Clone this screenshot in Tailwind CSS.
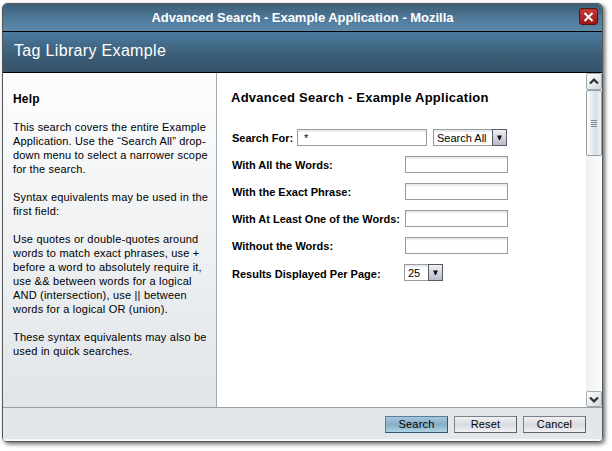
<!DOCTYPE html>
<html lang="en">
<head>
<meta charset="utf-8">
<title>Advanced Search - Example Application - Mozilla</title>
<script src="https://cdn.jsdelivr.net/npm/@tailwindcss/browser@4"></script>
</head>
<body class="bg-white w-[612px] h-[451px] overflow-hidden pl-[2px] pt-[3px] font-['Liberation_Sans',Arial,sans-serif] text-[11px] leading-[14px] text-black">
<div class="w-[601px] h-[439px] flex flex-col rounded-[5px] border border-[#55595c] overflow-hidden shadow-[2px_2px_4px_rgba(0,0,0,0.6)]">
  <header class="relative h-[28px] shrink-0 flex items-center justify-center border-b border-black bg-linear-to-b from-[#3c5d75] via-[#4f7898] to-[#5c8aab] text-white">
    <h1 class="text-[13px] font-bold leading-[16px] tracking-[-0.02px] whitespace-nowrap">Advanced Search - Example Application - Mozilla</h1>
    <button class="absolute left-[576px] top-[4px] w-[19px] h-[17px] flex items-center justify-center rounded-[3px] border border-[#5d1212] bg-linear-to-b from-[#c23a38] to-[#a01412]" aria-label="Close">
      <svg width="11" height="10" viewBox="0 0 11 10" fill="none" stroke="#fff" stroke-width="2"><path d="M1.5 1 9.500 9M9.500 1 1.500 9"/></svg>
    </button>
  </header>
  <div class="h-[41px] shrink-0 flex items-center pl-[11px] pb-[3px] border-b border-black bg-linear-to-b from-[#4a789c] from-5% via-[#3b5d76] via-60% to-[#36536a] text-white text-[16px] leading-[18px]"><span class="tracking-[0.33px]">Tag Library Example</span></div>
  <main class="h-[335px] shrink-0 flex border-b border-[#9a9fa3] bg-white">
    <aside class="w-[214px] shrink-0 border-r border-[#9eabb6] bg-linear-to-b from-[#fdfdfd] to-[#e1e5e8] pl-[10px] pt-[19px] whitespace-nowrap">
      <h2 class="font-bold text-[12px] tracking-[0.2px] mb-[14px]">Help</h2>
      <p class="mb-[14px] tracking-[0.16px]">This search covers the entire Example<br>Application. Use the “Search All” drop-<br>down menu to select a narrower scope<br>for the search.</p>
      <p class="mb-[14px] tracking-[0.18px]">Syntax equivalents may be used in the<br>first field:</p>
      <p class="mb-[14px] tracking-[0.2px]">Use quotes or double-quotes around<br>words to match exact phrases, use +<br>before a word to absolutely require it,<br>use &amp;&amp; between words for a logical<br>AND (intersection), use || between<br>words for a logical OR (union).</p>
      <p class="tracking-[0.2px]">These syntax equivalents may also be<br>used in quick searches.</p>
    </aside>
    <section class="grow pl-[14px] pt-[17px] whitespace-nowrap">
      <h2 class="font-bold text-[13px] leading-[16px] tracking-[0.26px] mb-[23px]">Advanced Search - Example Application</h2>
      <form class="flex flex-col gap-[10px] pl-[1px]">
        <div class="flex h-[17px]">
          <b class="w-[65px] pt-[2px]">Search For:</b>
          <div class="w-[130px] border border-[#9a9c9f] shadow-[inset_0_2px_1px_#e9eaeb] pl-[6px] pt-[1px] mr-[6px]">*</div>
          <div class="w-[74px] flex border border-[#9a9c9f] shadow-[inset_0_2px_1px_#e9eaeb]"><span class="pl-[3px] pt-[1px] grow">Search All</span><span class="w-[15px] h-[17px] -m-px flex items-center justify-center border border-[#565a66] bg-linear-to-b from-[#f0f0f5] to-[#b9bbc7]"><svg width="5" height="5" viewBox="0 0 5 5"><path d="M0 .5h5L3 5H2z" fill="#111"/></svg></span></div>
        </div>
        <div class="flex h-[17px]"><b class="w-[173px] pt-[2px]">With All the Words:</b><div class="w-[103px] border border-[#9a9c9f] shadow-[inset_0_2px_1px_#e9eaeb]"></div></div>
        <div class="flex h-[17px]"><b class="w-[173px] pt-[2px]">With the Exact Phrase:</b><div class="w-[103px] border border-[#9a9c9f] shadow-[inset_0_2px_1px_#e9eaeb]"></div></div>
        <div class="flex h-[17px]"><b class="w-[173px] pt-[2px]">With At Least One of the Words:</b><div class="w-[103px] border border-[#9a9c9f] shadow-[inset_0_2px_1px_#e9eaeb]"></div></div>
        <div class="flex h-[17px]"><b class="w-[173px] pt-[2px]">Without the Words:</b><div class="w-[103px] border border-[#9a9c9f] shadow-[inset_0_2px_1px_#e9eaeb]"></div></div>
        <div class="flex h-[17px]"><b class="w-[172px] pt-[3px]">Results Displayed Per Page:</b>
          <div class="w-[39px] flex border border-[#9a9c9f] shadow-[inset_0_2px_1px_#e9eaeb]"><span class="pl-[3px] pt-[1px] grow">25</span><span class="w-[15px] h-[17px] -m-px flex items-center justify-center border border-[#565a66] bg-linear-to-b from-[#f0f0f5] to-[#b9bbc7]"><svg width="5" height="5" viewBox="0 0 5 5"><path d="M0 .5h5L3 5H2z" fill="#111"/></svg></span></div>
        </div>
      </form>
    </section>
    <div class="w-[16px] shrink-0 flex flex-col bg-linear-to-r from-[#edf1f3] to-[#fbfcfc]">
      <div class="h-[17px] flex items-center justify-center rounded-[2px] border border-[#a2abb1] bg-linear-to-br from-white to-[#cfd9df]"><svg width="10" height="7" viewBox="0 0 10 7" fill="none" stroke="#303436" stroke-width="2.3"><path d="M1 5.500 5 1.700 9 5.500"/></svg></div>
      <div class="h-[66px] flex flex-col items-center justify-center gap-px rounded-[2px] border border-[#929da4] bg-linear-to-r from-[#fff] via-[#d8e0e8] via-60% to-[#eef2f5]">
        <i class="w-[6px] h-px bg-[#808a92]"></i><i class="w-[6px] h-px bg-[#808a92]"></i><i class="w-[6px] h-px bg-[#808a92]"></i><i class="w-[6px] h-px bg-[#808a92]"></i>
      </div>
      <div class="mt-auto h-[16px] flex items-center justify-center rounded-[2px] border border-[#a2abb1] bg-linear-to-br from-white to-[#cfd9df]"><svg width="10" height="7" viewBox="0 0 10 7" fill="none" stroke="#303436" stroke-width="2.3"><path d="M1 1.500 5 5.300 9 1.500"/></svg></div>
    </div>
  </main>
  <footer class="grow flex justify-end gap-[6px] pt-[8px] pr-[16px] bg-[#e3e6eb] border-b-2 border-[#f7f8f9]">
    <button class="w-[63px] h-[17px] pb-px border border-[#5a7f99] border-b-[#315874] border-r-[#315874] bg-linear-to-b from-[#a6c6da] via-[#86aec8] to-[#b0d3e5] leading-[14px] tracking-[0.2px]">Search</button>
    <button class="w-[63px] h-[17px] pb-px border border-[#7c8087] border-b-[#5d6168] border-r-[#5d6168] bg-linear-to-b from-[#f1f1f5] via-[#d9dae1] to-[#f0f0f4] leading-[14px] tracking-[0.2px]">Reset</button>
    <button class="w-[63px] h-[17px] pb-px border border-[#7c8087] border-b-[#5d6168] border-r-[#5d6168] bg-linear-to-b from-[#f1f1f5] via-[#d9dae1] to-[#f0f0f4] leading-[14px] tracking-[0.2px]">Cancel</button>
  </footer>
</div>
</body>
</html>
